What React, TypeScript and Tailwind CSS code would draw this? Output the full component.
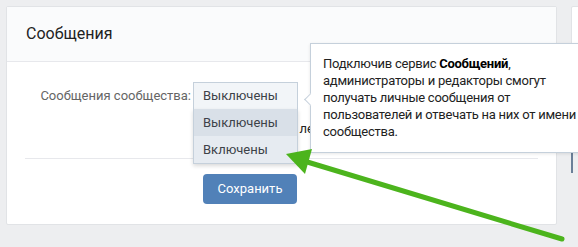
export default function App() {
  return (
    <div
      className="relative w-[578px] h-[247px] overflow-hidden bg-[#edeef0] flex items-start gap-[14px] pt-[6px] pl-[6px]"
      style={{ fontFamily: 'Roboto, "Open Sans", sans-serif' }}
    >
      {/* main settings card */}
      <div className="w-[551px] h-[219px] shrink-0 bg-white border border-[#e1e3e6] rounded-[2px] flex flex-col">
        <div className="h-[55px] shrink-0 bg-[#fafbfc] border-b border-[#e7e8ec] flex items-center pl-[19px]">
          <span className="text-[16px] text-[#222]">Сообщения</span>
        </div>

        <div className="flex flex-col pt-[20px]">
          <div className="flex items-center h-[27px]">
            <div className="w-[184px] text-right text-[13px] text-[#656565]">Сообщения сообщества:</div>
            <div className="relative ml-[2px]">
              <div className="w-[105px] h-[27px] bg-[#f2f5f8] border border-[#c5d0db] border-b-0 flex items-center pl-[9px] text-[13px] text-[#3d4248]">
                Выключены
              </div>
              <div className="absolute left-0 top-full z-10 w-[105px] border border-[#c5d0db] border-t-0 shadow-[0_2px_4px_rgba(0,0,0,0.15)]">
                <div className="h-[27px] bg-[#d9e0e8] flex items-center pl-[9px] text-[13px] text-[#3d4248]">Выключены</div>
                <div className="h-[27px] bg-[#e6ebf1] flex items-center pl-[9px] text-[13px] text-[#3d4248]">Включены</div>
              </div>
            </div>
          </div>

          <div className="flex items-center h-[20px] mt-[10px] pl-[196px] gap-[8px]">
            <span className="w-[15px] h-[15px] border border-[#c1c9d1] rounded-[2px]" />
            <span className="text-[13px] text-[#222]">Добавить в левое меню</span>
          </div>

          <div className="mx-[18px] mt-[19px] h-px bg-[#e7e8ec]" />

          <div className="pl-[196px] pt-[15px]">
            <button className="w-[94px] h-[30px] rounded-[4px] bg-[#5181b8] text-white text-[13px]">Сохранить</button>
          </div>
        </div>
      </div>

      {/* right menu card */}
      <div className="relative w-[40px] h-[143px] shrink-0 bg-white border border-[#e1e3e6] rounded-[2px]">
        <div className="absolute left-[-1px] top-[146px] w-[2px] h-[20px] bg-[#6a7f98]" />
      </div>

      {/* tooltip */}
      <div className="absolute left-[310px] top-[43px] z-20 w-[290px] h-[110px] bg-white border border-[#c5d0db] shadow-[0_1px_3px_rgba(0,0,0,0.1)] pl-[12px] pt-[11px] text-[13px] leading-[17px] tracking-[-0.25px] text-[#222]">
        <div className="absolute left-[-5px] top-[51px] w-[9px] h-[9px] bg-white border-l border-b border-[#c5d0db] rotate-45" />
        <p className="relative">
          Подключив сервис <b className="font-bold text-black">Сообщений</b>,<br />
          администраторы и редакторы смогут<br />
          получать личные сообщения от<br />
          пользователей и отвечать на них от имени<br />
          сообщества.
        </p>
      </div>

      {/* green pointer arrow */}
      <svg className="absolute left-0 top-0 z-30 pointer-events-none" width="578" height="247" viewBox="0 0 578 247">
        <line x1="562" y1="239" x2="304" y2="161" stroke="#4cb41d" strokeWidth="5" strokeLinecap="round" />
        <polygon points="286,154 312,149 305,174" fill="#4cb41d" />
      </svg>
    </div>
  );
}
